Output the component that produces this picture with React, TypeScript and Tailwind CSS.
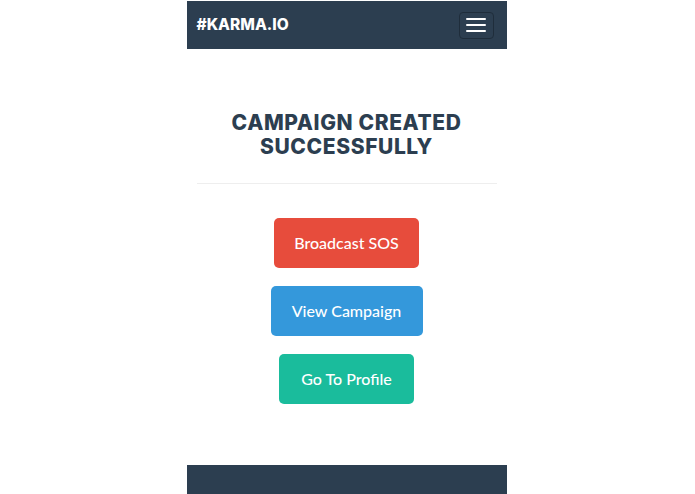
import React from "react";

const buttons = [
  { label: "Broadcast SOS", cls: "bg-[#e74c3c] w-[145px]" },
  { label: "View Campaign", cls: "bg-[#3498db] w-[152px]" },
  { label: "Go To Profile", cls: "bg-[#1abc9c] w-[135px]" },
];

export default function App() {
  return (
    <div className="min-h-[494px] bg-white flex justify-center">
      <div className="w-[320px] flex flex-col -translate-x-px">
        {/* Navbar */}
        <div className="mt-px h-12 bg-[#2c3e50] flex items-center justify-between px-[10px]">
          <span className="text-white text-[15.5px] font-extrabold font-['Inter',sans-serif]">
            #KARMA.IO
          </span>
          <button className="w-[35px] h-[27px] rounded border border-[#1f2d3b] flex flex-col items-center justify-center gap-[4px] mr-[3px]">
            <span className="block w-[20px] h-[2px] bg-white rounded-sm" />
            <span className="block w-[20px] h-[2px] bg-white rounded-sm" />
            <span className="block w-[20px] h-[2px] bg-white rounded-sm" />
          </button>
        </div>

        {/* Content */}
        <div className="flex-1 px-[10px] pt-[62px]">
          <h1 className="text-center text-[#2c3e50] text-[21px] leading-[24px] font-extrabold uppercase tracking-[0.6px] font-['Inter',sans-serif]">
            Campaign Created
            <br />
            Successfully
          </h1>
          <hr className="mt-[24px] border-t border-[#eeeeee]" />
          <div className="flex flex-col items-center gap-[18px] pt-[34px]">
            {buttons.map((b) => (
              <button
                key={b.label}
                className={`${b.cls} h-[50px] rounded-[5px] text-white text-[16px] font-medium font-['Lato',sans-serif]`}
              >
                {b.label}
              </button>
            ))}
          </div>
        </div>

        {/* Footer */}
        <div className="h-[29px] bg-[#2c3e50] mt-[61px]" />
      </div>
    </div>
  );
}
